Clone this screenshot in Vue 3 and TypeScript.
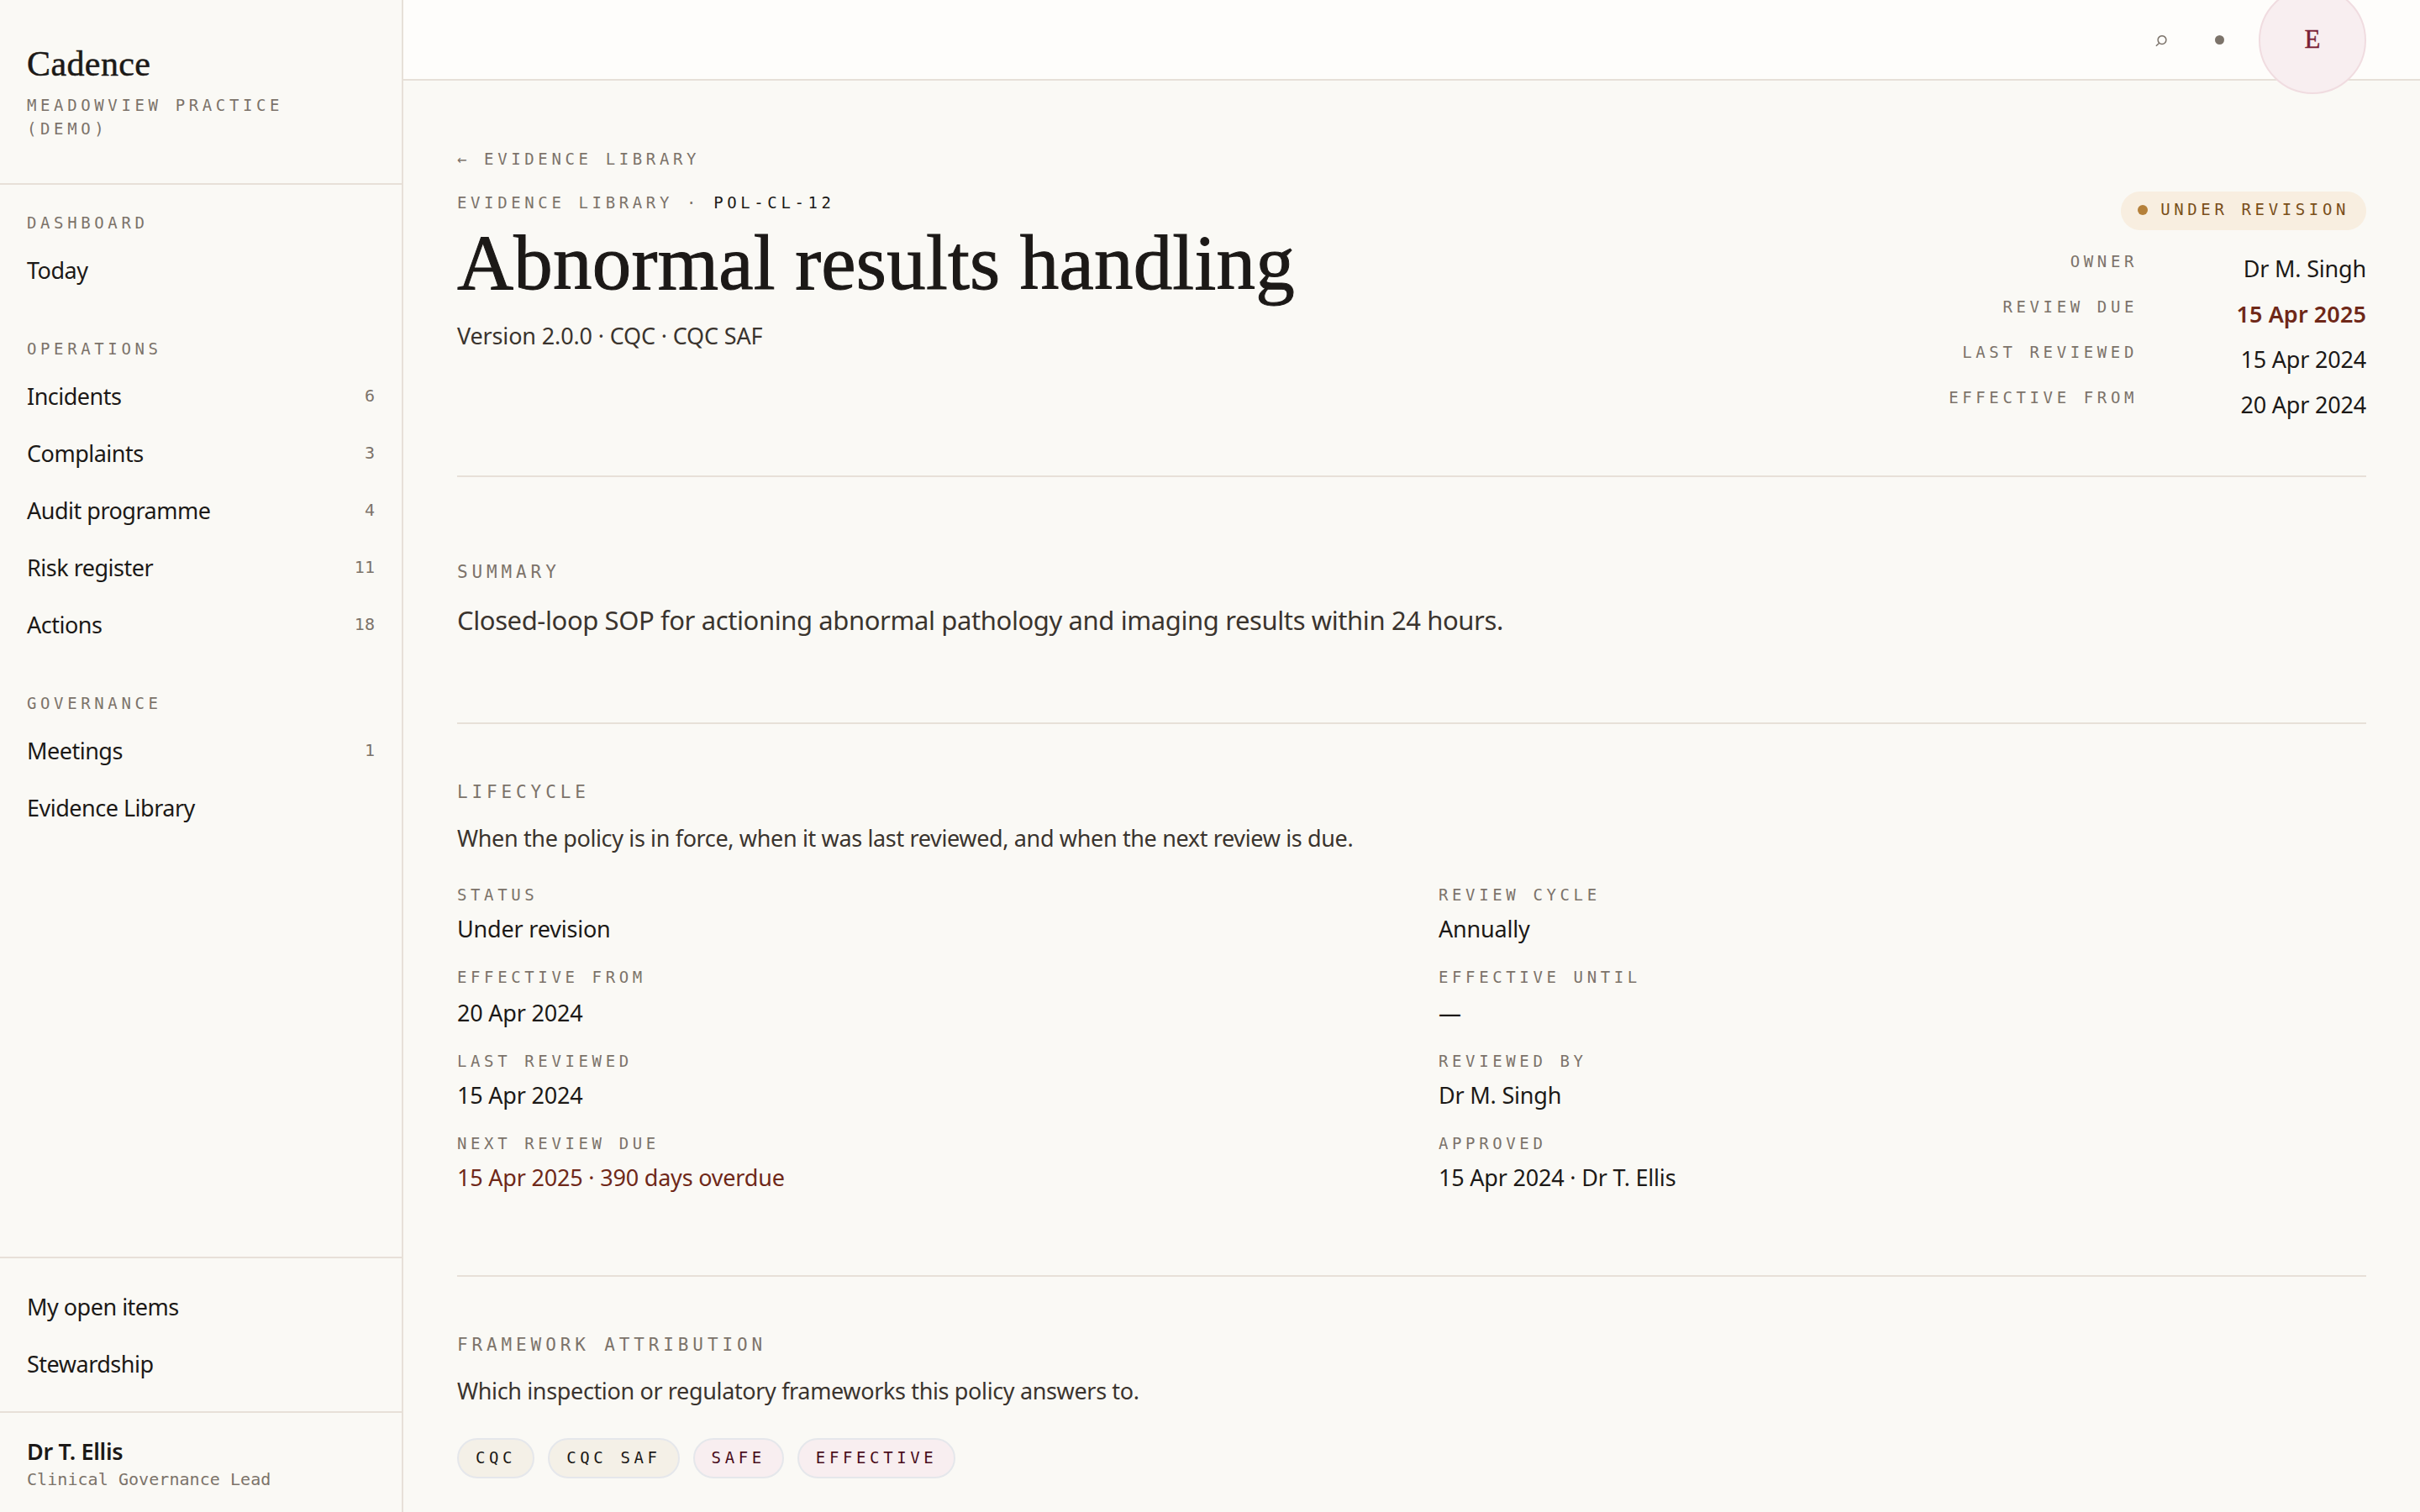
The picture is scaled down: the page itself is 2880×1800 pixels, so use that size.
<script setup lang="ts">
interface NavItem { label: string; count?: number }
interface NavGroup { title: string; items: NavItem[] }
interface Field { label: string; value: string; tone?: 'overdue' }
interface Chip { label: string; tone: 'neutral' | 'accent' }

const groups: NavGroup[] = [
  { title: 'Dashboard', items: [{ label: 'Today' }] },
  {
    title: 'Operations',
    items: [
      { label: 'Incidents', count: 6 },
      { label: 'Complaints', count: 3 },
      { label: 'Audit programme', count: 4 },
      { label: 'Risk register', count: 11 },
      { label: 'Actions', count: 18 },
    ],
  },
  { title: 'Governance', items: [{ label: 'Meetings', count: 1 }, { label: 'Evidence Library' }] },
]

const personal: string[] = ['My open items', 'Stewardship']

const meta: Field[] = [
  { label: 'Owner', value: 'Dr M. Singh' },
  { label: 'Review due', value: '15 Apr 2025', tone: 'overdue' },
  { label: 'Last reviewed', value: '15 Apr 2024' },
  { label: 'Effective from', value: '20 Apr 2024' },
]

const lifecycle: Field[] = [
  { label: 'Status', value: 'Under revision' },
  { label: 'Review cycle', value: 'Annually' },
  { label: 'Effective from', value: '20 Apr 2024' },
  { label: 'Effective until', value: '—' },
  { label: 'Last reviewed', value: '15 Apr 2024' },
  { label: 'Reviewed by', value: 'Dr M. Singh' },
  { label: 'Next review due', value: '15 Apr 2025 · 390 days overdue', tone: 'overdue' },
  { label: 'Approved', value: '15 Apr 2024 · Dr T. Ellis' },
]

const chips: Chip[] = [
  { label: 'CQC', tone: 'neutral' },
  { label: 'CQC SAF', tone: 'neutral' },
  { label: 'Safe', tone: 'accent' },
  { label: 'Effective', tone: 'accent' },
]
</script>

<template>
  <div class="app">
    <aside class="sidebar">
      <div class="brand">
        <div class="brand-name">Cadence</div>
        <div class="eyebrow">Meadowview Practice (Demo)</div>
      </div>
      <nav class="nav">
        <section v-for="group in groups" :key="group.title" class="nav-group">
          <h2 class="eyebrow nav-title">{{ group.title }}</h2>
          <a v-for="item in group.items" :key="item.label" class="nav-item">
            <span>{{ item.label }}</span>
            <span v-if="item.count" class="count">{{ item.count }}</span>
          </a>
        </section>
      </nav>
      <div class="personal">
        <a v-for="label in personal" :key="label" class="nav-item">{{ label }}</a>
      </div>
      <div class="user">
        <div class="user-name">Dr T. Ellis</div>
        <div class="user-role">Clinical Governance Lead</div>
      </div>
    </aside>

    <div class="body">
      <header class="topbar">
        <svg class="search" viewBox="0 0 14 14" width="14" height="14">
          <circle cx="8" cy="5.6" r="4.9" />
          <path d="M4.7 9.2 L0.9 12.8" />
        </svg>
        <span class="notice"></span>
        <div class="avatar">E</div>
      </header>

      <main class="main">
        <a class="eyebrow back">← Evidence Library</a>

        <div class="page-head">
          <div>
            <div class="eyebrow">Evidence Library · <span class="code">POL-CL-12</span></div>
            <h1 class="title">Abnormal results handling</h1>
            <p class="text sub">Version 2.0.0 · CQC · CQC SAF</p>
          </div>
          <div class="head-side">
            <span class="status"><span class="status-dot"></span>Under revision</span>
            <dl class="meta">
              <template v-for="row in meta" :key="row.label">
                <dt class="eyebrow">{{ row.label }}</dt>
                <dd class="value" :class="{ overdue: row.tone, strong: row.tone }">{{ row.value }}</dd>
              </template>
            </dl>
          </div>
        </div>

        <section class="section summary">
          <h2 class="heading">Summary</h2>
          <p class="lead">Closed-loop SOP for actioning abnormal pathology and imaging results within 24 hours.</p>
        </section>

        <section class="section lifecycle">
          <h2 class="heading">Lifecycle</h2>
          <p class="text">When the policy is in force, when it was last reviewed, and when the next review is due.</p>
          <dl class="fields">
            <div v-for="field in lifecycle" :key="field.label" class="field">
              <dt class="eyebrow">{{ field.label }}</dt>
              <dd class="value" :class="{ overdue: field.tone }">{{ field.value }}</dd>
            </div>
          </dl>
        </section>

        <section class="section last">
          <h2 class="heading">Framework attribution</h2>
          <p class="text">Which inspection or regulatory frameworks this policy answers to.</p>
          <div class="chips">
            <span v-for="chip in chips" :key="chip.label" class="chip" :class="chip.tone">{{ chip.label }}</span>
          </div>
        </section>
      </main>
    </div>
  </div>
</template>

<style>
html, body { margin: 0; background: #faf9f5; }
</style>

<style scoped>
.app {
  display: flex;
  width: 2880px;
  height: 1800px;
  overflow: hidden;
  background: #faf9f5;
  color: #1c1917;
  font-family: "Noto Sans", sans-serif;
  font-size: 27px;
}
h1, h2, p, dl, dt, dd { margin: 0; font-weight: 400; }

.eyebrow {
  font-family: "DejaVu Sans Mono", monospace;
  font-size: 19px;
  line-height: 28px;
  letter-spacing: 4.62px;
  text-transform: uppercase;
  color: #7c736a;
}

.sidebar {
  box-sizing: border-box;
  display: flex;
  flex-direction: column;
  flex: none;
  width: 480px;
  border-right: 2px solid #e7e0d8;
}
.brand {
  box-sizing: border-box;
  height: 220px;
  padding: 52px 32px 0;
  border-bottom: 2px solid #e7e0d8;
}
.brand-name {
  margin-bottom: 11px;
  font-family: "Liberation Serif", serif;
  font-size: 42px;
  line-height: 48px;
  letter-spacing: 0.4px;
  -webkit-text-stroke: 0.5px currentColor;
}
.nav {
  display: flex;
  flex: 1;
  flex-direction: column;
  gap: 46px;
  padding-top: 31px;
}
.nav-title { padding: 0 32px; margin-bottom: 8px; }
.nav-item {
  box-sizing: border-box;
  display: flex;
  align-items: center;
  justify-content: space-between;
  height: 68px;
  padding: 1px 32px 0;
  letter-spacing: -0.5px;
}
.count {
  margin-bottom: 1px;
  font-family: "DejaVu Sans Mono", monospace;
  font-size: 20px;
  line-height: 28px;
  letter-spacing: 0.06px;
  color: #7c736a;
}
.personal { padding: 23px 0; border-top: 2px solid #e7e0d8; }
.user { padding: 26px 32px 25px; border-top: 2px solid #e7e0d8; }
.user-name { line-height: 39px; font-weight: 600; letter-spacing: -0.35px; }
.user-role {
  font-family: "DejaVu Sans Mono", monospace;
  font-size: 20px;
  line-height: 28px;
  letter-spacing: 0.06px;
  color: #7c736a;
}

.body { display: flex; flex: 1; flex-direction: column; min-width: 0; }
.topbar {
  box-sizing: border-box;
  display: flex;
  align-items: center;
  justify-content: flex-end;
  flex: none;
  height: 96px;
  padding-right: 64px;
  background: #fefdfb;
  border-bottom: 2px solid #e7e0d8;
}
.search {
  margin: 4px 57px 0 0;
  fill: none;
  stroke: #7c736a;
  stroke-width: 1.5;
}
.notice {
  width: 11px;
  height: 11px;
  margin-right: 41px;
  border-radius: 50%;
  background: #7c736a;
}
.avatar {
  box-sizing: border-box;
  flex: none;
  width: 128px;
  height: 128px;
  margin-top: 2px;
  border: 2px solid #f0dce0;
  border-radius: 50%;
  background: #f8eef0;
  color: #7a1f35;
  font-family: "Liberation Serif", serif;
  font-size: 31px;
  line-height: 121px;
  text-align: center;
  -webkit-text-stroke: 0.4px currentColor;
}

.main { padding: 79px 64px 0; }
.back { display: block; margin-bottom: 24px; }
.page-head {
  box-sizing: border-box;
  display: flex;
  justify-content: space-between;
  height: 341px;
  border-bottom: 2px solid #e7e0d8;
}
.code { color: #1c1917; }
.title {
  margin: 9px 0 16px;
  font-family: "Liberation Serif", serif;
  font-size: 93px;
  line-height: 97px;
  letter-spacing: 0.2px;
  -webkit-text-stroke: 1px currentColor;
}
.text {
  padding-top: 1px;
  line-height: 43px;
  letter-spacing: -0.36px;
  color: #3a342e;
}
.sub { letter-spacing: -0.15px; }
.head-side { display: flex; flex-direction: column; align-items: flex-end; }
.status {
  display: inline-flex;
  align-items: center;
  box-sizing: border-box;
  height: 46px;
  margin-top: 1px;
  padding: 0 20px 4px;
  border-radius: 23px;
  background: #f8eee0;
  color: #7a4f1a;
  font-family: "DejaVu Sans Mono", monospace;
  font-size: 19px;
  line-height: 28px;
  letter-spacing: 4.62px;
  text-transform: uppercase;
}
.status-dot {
  width: 12px;
  height: 12px;
  margin: 2px 15px 0 0;
  border-radius: 50%;
  background: #b5803a;
}
.meta {
  display: grid;
  grid-template-columns: auto 240px;
  gap: 10px 32px;
  margin-top: 23px;
  text-align: right;
}
.value { padding-top: 1px; line-height: 43px; letter-spacing: -0.2px; }
.overdue { color: #6f2818; }
.strong { font-weight: 600; letter-spacing: 0.1px; }

.section { border-bottom: 2px solid #e7e0d8; }
.last { border-bottom: 0; }
.heading {
  padding-top: 65px;
  margin-bottom: 16px;
  font-family: "DejaVu Sans Mono", monospace;
  font-size: 21px;
  line-height: 32px;
  letter-spacing: 4.88px;
  text-transform: uppercase;
  color: #7c736a;
}
.summary { padding-bottom: 95px; }
.summary .heading { padding-top: 97px; margin-bottom: 14px; }
.lead { font-size: 31px; line-height: 54px; letter-spacing: -0.4px; color: #3a342e; }

.lifecycle { box-sizing: border-box; height: 658px; }
.fields {
  display: grid;
  grid-template-columns: 1fr 1fr;
  gap: 22px 64px;
  margin-top: 32px;
}
.field .eyebrow { margin-bottom: 4px; }
.field:nth-child(3) .eyebrow,
.field:nth-child(4) .eyebrow { margin-bottom: 6px; }

.chips { display: flex; gap: 16px; margin-top: 35px; }
.chip {
  padding: 7px 20px 9px;
  border: 2px solid #e5e7eb;
  border-radius: 24px;
  font-family: "DejaVu Sans Mono", monospace;
  font-size: 19px;
  line-height: 28px;
  letter-spacing: 4.62px;
  text-transform: uppercase;
}
.neutral { background: #f4f0e7; color: #1c1917; }
.accent { background: #f8eef0; color: #4a0d1c; }
</style>
